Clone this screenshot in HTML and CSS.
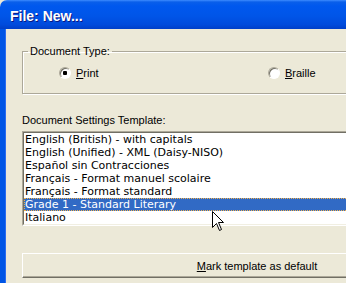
FILE: index.html
```html
<!DOCTYPE html>
<html lang="en">
    <head>
        <meta charset="utf-8">
        <title>File: New...</title>
        <link rel="stylesheet" href="styles.css">
    </head>
    <body>
        <div class="window">
            <div class="titlebar">
                <span class="title">File: New...</span>
            </div>

            <div class="dialog">
                <fieldset class="group">
                    <legend>Document Type:</legend>
                    <div class="radios">
                        <label class="radio"><span class="circle on"></span><span><u>P</u>rint</span></label>
                        <label class="radio"><span class="circle"></span><span><u>B</u>raille</span></label>
                    </div>
                </fieldset>

                <div class="caption">Document Settings Template:</div>

                <div class="listframe">
                    <ul class="listbox">
                        <li>English (British) - with capitals</li>
                        <li>English (Unified) - XML (Daisy-NISO)</li>
                        <li>Español sin Contracciones</li>
                        <li>Français - Format manuel scolaire</li>
                        <li>Français - Format standard</li>
                        <li class="sel">Grade 1 - Standard Literary</li>
                        <li>Italiano</li>
                    </ul>
                </div>

                <button class="wide-btn"><u>M</u>ark template as default</button>
            </div>
        </div>

        <svg class="cursor" width="13" height="21" viewBox="0 0 13 21">
            <path d="M0.5 0.5 L0.5 16.5 L4.5 12.5 L7.5 19.5 L9.5 18.5 L6.5 11.5 L11.5 11.5 Z" fill="#fff" stroke="#000" stroke-width="1"/>
        </svg>
    </body>
</html>
```

FILE: styles.css
```css
html,
body {
    margin: 0px;
    overflow: hidden;
    background-color: #ECE9D8;
}

.window {
    width: 500px;
    height: 283px;
    font-family: "Liberation Sans", Arial, sans-serif;
    font-size: 11px;
    color: #000;
}

.titlebar {
    height: 29px;
    box-sizing: border-box;
    padding: 2px 0px 0px 10px;
    display: flex;
    align-items: center;
    border-radius: 7px 7px 0px 0px;
    background: linear-gradient(#3d8cff 0px, #0a5fea 2px, #0058ee 6px, #0055e8 55%, #004bdc 85%, #003fc8 100%);
}

.title {
    color: #fff;
    font-weight: bold;
    font-size: 14px;
    text-shadow: 1px 1px #0a1883;
}

.dialog {
    height: 254px;
    box-sizing: border-box;
    border-left: 5px solid #0055e5;
    box-shadow: inset 1px 0px #2a6cf0;
    padding: 16px 8px 0px 17px;
}

.group {
    margin: 0px;
    padding: 8px 0px 13px 5px;
    border: 1px solid #aca899;
    box-shadow: inset 1px 1px #fff, 1px 1px #fff;
}

.group legend {
    padding: 0px 2px;
    line-height: 13px;
}

.radios {
    display: grid;
    grid-template-columns: 209px auto;
    margin-left: 31px;
}

.radio {
    display: flex;
    align-items: center;
    gap: 5px;
    height: 14px;
}

.circle {
    width: 12px;
    height: 12px;
    box-sizing: border-box;
    border-radius: 50%;
    border: 1px solid;
    border-color: #aca899 #fff #fff #aca899;
    box-shadow: inset 1px 1px #716f64;
    background: #fff;
}

.circle.on {
    background: radial-gradient(circle, #000 2px, #fff 2.5px);
}

.caption {
    margin-top: 20px;
    line-height: 13px;
}

.listframe {
    margin-top: 4px;
    border: 1px solid;
    border-color: #aca899 #fff #fff #aca899;
}

.listbox {
    margin: 0px;
    padding: 0px;
    list-style: none;
    background: #fff;
    border: 1px solid;
    border-color: #716f64 #f1efe2 #f1efe2 #716f64;
    font-family: "DejaVu Sans", Verdana, sans-serif;
}

.listbox li {
    height: 13px;
    line-height: 13px;
    padding-left: 1px;
    white-space: nowrap;
}

.listbox li.sel {
    background: #316ac5;
    color: #fff;
    outline: 1px dotted #f2b24d;
    outline-offset: -1px;
}

.wide-btn {
    display: block;
    width: 100%;
    height: 25px;
    margin-top: 27px;
    padding: 0px;
    font: inherit;
    color: #000;
    background: #ece9d8;
    border: 1px solid;
    border-color: #fff #716f64 #716f64 #fff;
    box-shadow: inset -1px -1px #aca899;
}

.cursor {
    position: absolute;
    left: 212px;
    top: 211px;
}
```
